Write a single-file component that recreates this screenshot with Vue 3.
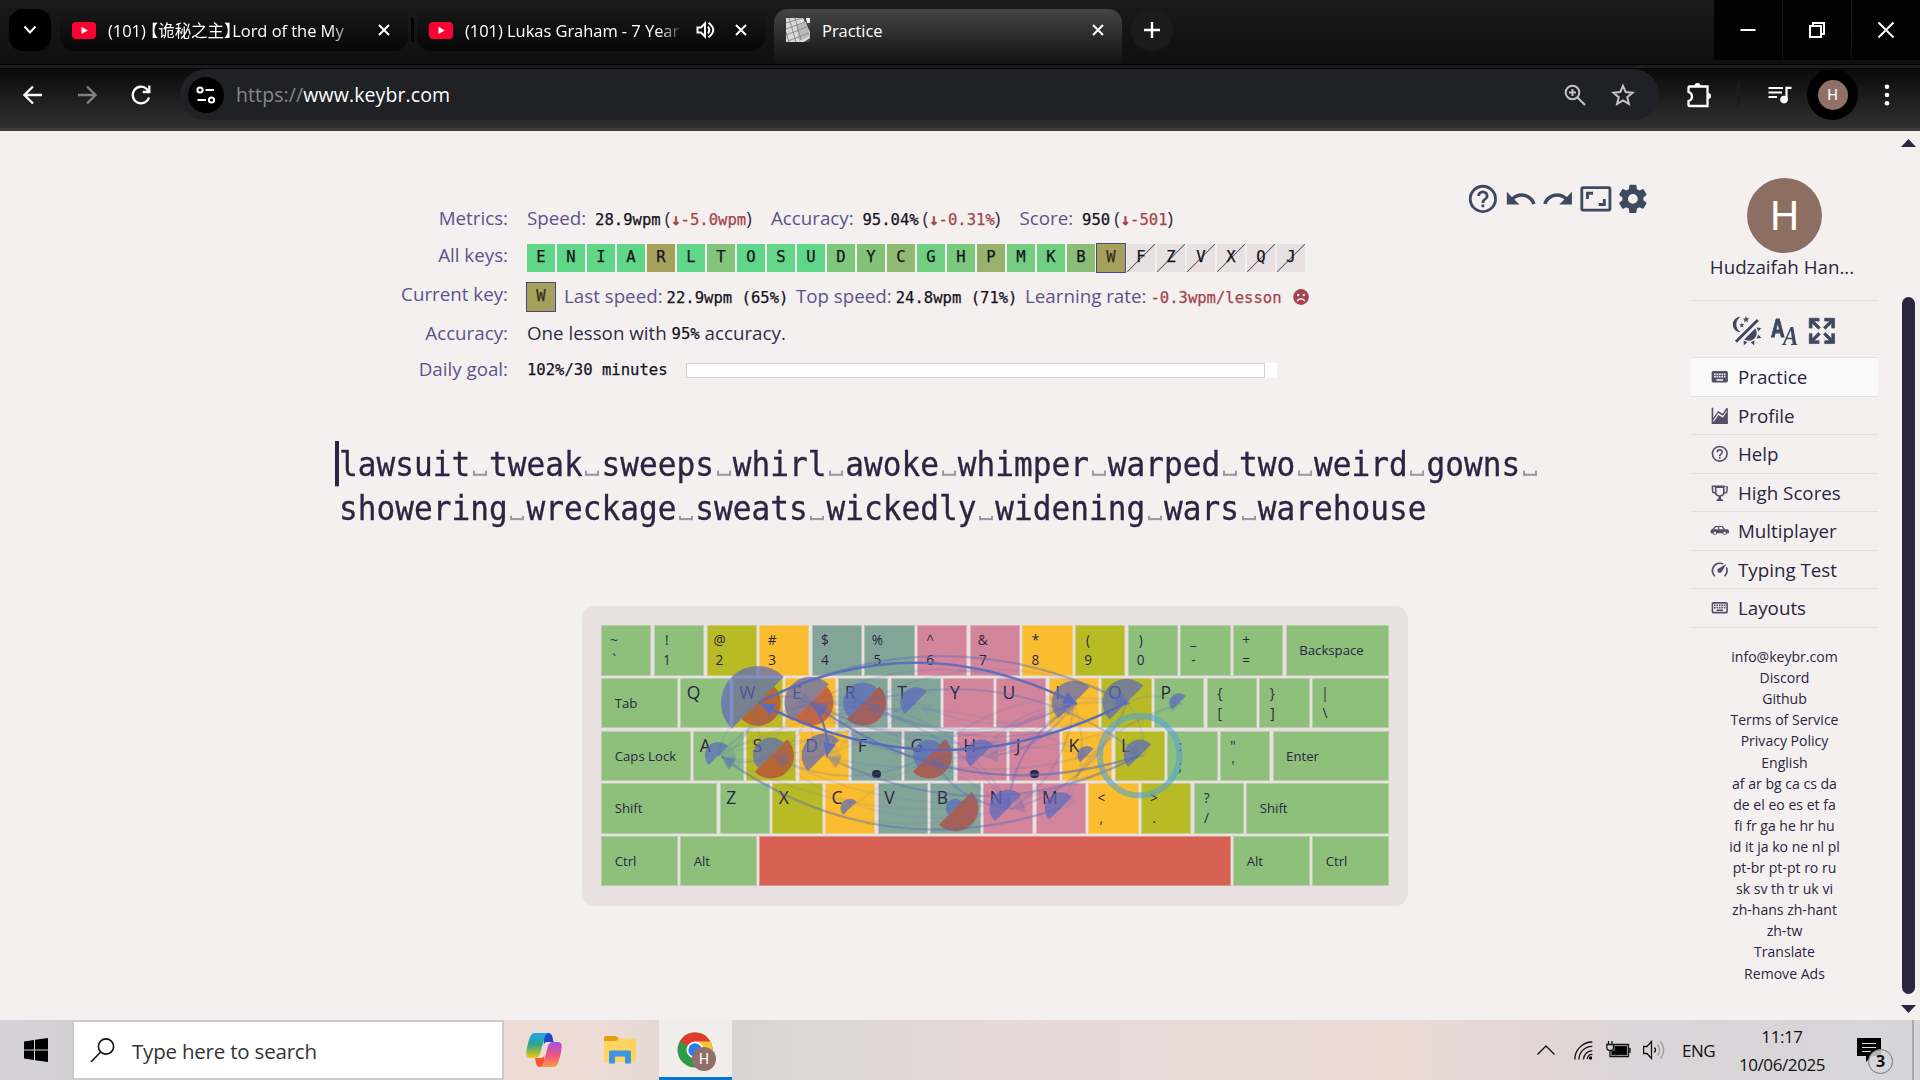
<script setup>
const tabs = [
  { title: '(101) 【诡秘之主】Lord of the My', muted: false },
  { title: '(101) Lukas Graham - 7 Year', muted: true },
]

const G1 = '#60d788', G2 = '#82c57a'
const allKeys = [
  ['E', G1], ['N', G1], ['I', G1], ['A', G1], ['R', '#a5a05c'], ['L', '#60d788'], ['T', G2], ['O', G1], ['S', '#66d587'],
  ['U', '#60d788'], ['D', '#7fc77c'], ['Y', '#85c279'], ['C', '#91b972'], ['G', '#70cf82'], ['H', '#7bc97e'], ['P', '#97b26c'],
  ['M', '#74cd80'], ['K', '#70cf82'], ['B', '#8abd75'], ['W', '#a5a05c', 'focused'], ['F', '#e9e1e1', 'off'], ['Z', '#e9e1e1', 'off'],
  ['V', '#e9e1e1', 'off'], ['X', '#e9e1e1', 'off'], ['Q', '#e9e1e1', 'off'], ['J', '#e9e1e1', 'off'],
].map(([ch, color, state]) => ({ ch, color, state }))

const lines = [
  'lawsuit tweak sweeps whirl awoke whimper warped two weird gowns '.split(''),
  'showering wreckage sweats wickedly widening wars warehouse'.split(''),
]

const P = {
  help: 'M11,18H13V16H11V18M12,2A10,10 0 0,0 2,12A10,10 0 0,0 12,22A10,10 0 0,0 22,12A10,10 0 0,0 12,2M12,20C7.59,20 4,16.41 4,12C4,7.59 7.59,4 12,4C16.41,4 20,7.59 20,12C20,16.41 16.41,20 12,20M12,6A4,4 0 0,0 8,10H10A2,2 0 0,1 12,8A2,2 0 0,1 14,10C14,12 11,11.75 11,15H13C13,12.75 16,12.5 16,10A4,4 0 0,0 12,6Z',
  undo: 'M12.5,8C9.85,8 7.45,9 5.6,10.6L2,7V16H11L7.38,12.38C8.77,11.22 10.54,10.5 12.5,10.5C16.04,10.5 19.05,12.81 20.1,16L22.47,15.22C21.08,11.03 17.15,8 12.5,8Z',
  redo: 'M18.4,10.6C16.55,9 14.15,8 11.5,8C6.85,8 2.92,11.03 1.54,15.22L3.9,16C4.95,12.81 7.95,10.5 11.5,10.5C13.45,10.5 15.23,11.22 16.62,12.38L13,16H22V7L18.4,10.6Z',
  ratio: 'M19,12H17V15H14V17H19V12M7,9H10V7H5V12H7V9M21,3H3A2,2 0 0,0 1,5V19A2,2 0 0,0 3,21H21A2,2 0 0,0 23,19V5A2,2 0 0,0 21,3M21,19H3V5H21V19Z',
  cog: 'M12,15.5A3.5,3.5 0 0,1 8.5,12A3.5,3.5 0 0,1 12,8.5A3.5,3.5 0 0,1 15.5,12A3.5,3.5 0 0,1 12,15.5M19.43,12.97C19.47,12.65 19.5,12.33 19.5,12C19.5,11.67 19.47,11.34 19.43,11L21.54,9.37C21.73,9.22 21.78,8.95 21.66,8.73L19.66,5.27C19.54,5.05 19.27,4.96 19.05,5.05L16.56,6.05C16.04,5.66 15.5,5.32 14.87,5.07L14.5,2.42C14.46,2.18 14.25,2 14,2H10C9.75,2 9.54,2.18 9.5,2.42L9.13,5.07C8.5,5.32 7.96,5.66 7.44,6.05L4.95,5.05C4.73,4.96 4.46,5.05 4.34,5.27L2.34,8.73C2.21,8.95 2.27,9.22 2.46,9.37L4.57,11C4.53,11.34 4.5,11.67 4.5,12C4.5,12.33 4.53,12.65 4.57,12.97L2.46,14.63C2.27,14.78 2.21,15.05 2.34,15.27L4.34,18.73C4.46,18.95 4.73,19.03 4.95,18.95L7.44,17.94C7.96,18.34 8.5,18.68 9.13,18.93L9.5,21.58C9.54,21.82 9.75,22 10,22H14C14.25,22 14.46,21.82 14.5,21.58L14.87,18.93C15.5,18.67 16.04,18.34 16.56,17.94L19.05,18.95C19.27,19.03 19.54,18.95 19.66,18.73L21.66,15.27C21.78,15.05 21.73,14.78 21.54,14.63L19.43,12.97Z',
  theme: 'M7.5,2C5.71,3.15 4.5,5.18 4.5,7.5C4.5,9.82 5.71,11.85 7.53,13C4.46,13 2,10.54 2,7.5A5.5,5.5 0 0,1 7.5,2M19.07,3.5L20.5,4.93L4.93,20.5L3.5,19.07L19.07,3.5M12.89,5.93L11.41,5L9.97,6L10.39,4.3L9,3.24L10.75,3.12L11.33,1.47L12,3.1L13.73,3.13L12.38,4.26L12.89,5.93M9.59,9.54L8.43,8.81L7.31,9.59L7.65,8.27L6.56,7.44L7.92,7.35L8.37,6.06L8.88,7.33L10.24,7.36L9.19,8.23L9.59,9.54M19,13.5A5.5,5.5 0 0,1 13.5,19C12.28,19 11.15,18.6 10.24,17.93L17.93,10.24C18.6,11.15 19,12.28 19,13.5M14.6,20.08L17.37,18.93L17.13,22.28L14.6,20.08M18.93,17.38L20.08,14.61L22.28,17.15L18.93,17.38M20.08,12.42L18.94,9.64L22.28,9.88L20.08,12.42M9.63,18.93L12.4,20.08L9.87,22.27L9.63,18.93Z',
  expand: 'M9.5,13.09L10.91,14.5L6.41,19H10V21H3V14H5V17.59L9.5,13.09M10.91,9.5L9.5,10.91L5,6.41V10H3V3H10V5H6.41L10.91,9.5M14.5,13.09L19,17.59V14H21V21H14V19H17.59L13.09,14.5L14.5,13.09M13.09,9.5L17.59,5H14V3H21V10H19V6.41L14.5,10.91L13.09,9.5Z',
  keyboard: 'M19,10H17V8H19M19,13H17V11H19M16,10H14V8H16M16,13H14V11H16M16,17H8V15H16M7,10H5V8H7M7,13H5V11H7M8,11H10V13H8M8,8H10V10H8M11,11H13V13H11M11,8H13V10H11M20,5H4C2.89,5 2,5.89 2,7V17A2,2 0 0,0 4,19H20A2,2 0 0,0 22,17V7C22,5.89 21.1,5 20,5Z',
  keyboardOutline: 'M4,5A2,2 0 0,0 2,7V17A2,2 0 0,0 4,19H20A2,2 0 0,0 22,17V7A2,2 0 0,0 20,5H4M4,7H20V17H4V7M5,8V10H7V8H5M8,8V10H10V8H8M11,8V10H13V8H11M14,8V10H16V8H14M17,8V10H19V8H17M5,11V13H7V11H5M8,11V13H10V11H8M11,11V13H13V11H11M14,11V13H16V11H14M17,11V13H19V11H17M8,14V16H16V14H8Z',
  chart: 'M2,2H4V14.5L10,6.2L15.5,9.6L20.3,2L22,3V22H2V2M4,20L10.5,11L15.8,14.4L21,6.5L20.2,5.8L15.8,12L10.2,8.6L4,17.5V20Z',
  trophy: 'M6,3H18V4H22V6L21.6,11C21.3,12.2 20,13 18,13C17.5,15 16,16.3 13.5,16.7V19.5C15.2,19.8 16,20.5 16,22H8C8,20.5 8.8,19.8 10.5,19.5V16.7C8,16.3 6.5,15 6,13C4,13 2.7,12.2 2.4,11L2,6V3H6M4,5V10.5C4.3,11 5,11.2 6,11.2V5H4M18,5V11.2C19,11.2 19.7,11 20,10.5V5H18M8,6V12C8.3,13.9 9.5,15 12,15C14.5,15 15.7,13.9 16,12V6H8Z',
  car: 'M6.5,6H15.5L18.5,10H21.5C22.6,10 23.3,10.9 23.3,12V15H21A3,3 0 0,1 15.2,15H8.8A3,3 0 0,1 3,15H0.8V12C0.8,10.9 1.6,10 2.7,10L6.5,6M7.3,7.5L5,10H10V7.5H7.3M11.5,7.5V10H16.4L14.7,7.5H11.5M6,13.2A1.5,1.5 0 0,0 6,16.2A1.5,1.5 0 0,0 6,13.2M18,13.2A1.5,1.5 0 0,0 18,16.2A1.5,1.5 0 0,0 18,13.2Z',
  speed: 'M12,16A3,3 0 0,1 9,13C9,11.9 9.6,10.9 10.5,10.4L20.2,4.8L14.7,14.3C14.1,15.3 13.2,16 12,16M12,3C13.8,3 15.5,3.5 17,4.3L14.9,5.5C14,5.2 13,5 12,5A8,8 0 0,0 4,13C4,15.2 4.9,17.2 6.3,18.7C6.7,19.1 6.7,19.7 6.3,20.1C5.9,20.5 5.3,20.5 4.9,20.1A10,10 0 0,1 12,3M22,13C22,15.8 20.9,18.3 19.1,20.1C18.7,20.5 18.1,20.5 17.7,20.1C17.3,19.7 17.3,19.1 17.7,18.7A8,8 0 0,0 20,13C20,12 19.8,11 19.5,10.1L20.7,8C21.5,9.5 22,11.2 22,13Z',
}

const toolIcons = [P.help, P.undo, P.redo, P.ratio, P.cog]
const menu = [
  ['Practice', P.keyboard, true], ['Profile', P.chart], ['Help', P.help], ['High Scores', P.trophy],
  ['Multiplayer', P.car], ['Typing Test', P.speed], ['Layouts', P.keyboardOutline],
].map(([label, icon, active]) => ({ label, icon, active }))

const links = [
  'info@keybr.com', 'Discord', 'Github', 'Terms of Service', 'Privacy Policy', 'English', 'af ar bg ca cs da',
  'de el eo es et fa', 'fi fr ga he hr hu', 'id it ja ko ne nl pl', 'pt-br pt-pt ro ru', 'sk sv th tr uk vi',
  'zh-hans zh-hant', 'zh-tw', 'Translate', 'Remove Ads',
]

// Keyboard: width is in key units, finger picks the zone colour.
const U = 52.67
const GAP = 2.4
const sym = (top, bottom, finger) => ({ top, bottom, finger, w: 1 })
const mod = (label, w) => ({ label, w, finger: 'pinky' })
const letters = (s, fingers) => s.split('').map((ch, i) => ({ ch, w: 1, finger: fingers[i], dot: ch === 'F' || ch === 'J' }))
const p = 'pinky', r = 'ring', m = 'middle', a = 'left', b = 'right'
const rows = [
  [sym('~', '`', p), sym('!', '1', p), sym('@', '2', r), sym('#', '3', m), sym('$', '4', a), sym('%', '5', a), sym('^', '6', b),
    sym('&', '7', b), sym('*', '8', m), sym('(', '9', r), sym(')', '0', p), sym('_', '-', p), sym('+', '=', p), mod('Backspace', 2)],
  [mod('Tab', 1.5), ...letters('QWERTYUIOP', [p, r, m, a, a, b, b, m, r, p]), sym('{', '[', p), sym('}', ']', p), { top: '|', bottom: '\\', finger: p, w: 1.5 }],
  [mod('Caps Lock', 1.75), ...letters('ASDFGHJKL', [p, r, m, a, a, b, b, m, r]), sym(':', ';', p), sym('"', "'", p), mod('Enter', 2.25)],
  [mod('Shift', 2.25), ...letters('ZXCVBNM', [p, r, m, a, a, b, b]), sym('<', ',', m), sym('>', '.', r), sym('?', '/', p), mod('Shift', 2.75)],
  [mod('Ctrl', 1.5), mod('Alt', 1.5), { w: 9, finger: 'thumb' }, mod('Alt', 1.5), mod('Ctrl', 1.5)],
]
const centers = {}
rows.forEach((row, y) => {
  let x = 0
  row.forEach((k) => {
    if (k.ch) centers[k.ch] = [(x + k.w / 2) * U - GAP / 2, (y + 0.5) * U - GAP / 2]
    x += k.w
  })
})

const half = (ch, rad, side) => {
  const [x, y] = centers[ch]
  const d = rad * Math.SQRT1_2
  return `M${x - d},${y + d}A${rad},${rad} 0 0,${side} ${x + d},${y - d}Z`
}
const hits = { W: 36.8, E: 26, R: 20, T: 15.6, I: 22, O: 24, P: 9.5, A: 13.5, S: 18, D: 22, G: 15.7, H: 16, K: 9.5, L: 16, C: 9.5, B: 9.5, N: 18.5, M: 16 }
const misses = ['W', 'E', 'R', 'S', 'G', 'B']
const hitPaths = Object.entries(hits).map(([ch, rad]) => half(ch, rad, 1))
const missPaths = misses.map((ch) => half(ch, 23, 0))

const arcs = [
  ['AT', 0.1], ['TA', 0.1], ['AN', 0.1], ['NA', 0.08], ['IN', 0.2], ['OR', 0.16], ['RO', 0.12], ['ER', 0.14], ['RE', 0.12], ['TE', 0.12], ['WA', 0.15],
  ['AW', 0.1], ['AK', 0.1], ['KE', 0.16], ['EI', 0.16], ['IE', 0.15], ['ES', 0.12], ['SH', 0.1], ['HO', 0.13], ['HE', 0.12], ['OP', 0.14], ['PE', 0.1],
  ['TW', 0.1], ['SW', 0.08], ['CK', 0.1], ['DE', 0.12], ['IG', 0.12], ['GO', 0.12], ['AG', 0.08], ['HI', 0.15], ['IM', 0.12], ['MP', 0.16], ['OK', 0.08],
  ['RD', 0.1], ['ID', 0.13], ['NS', 0.08], ['LA', 0.1], ['IT', 0.12], ['UI', 0.08], ['RS', 0.12], ['SE', 0.1], ['EN', 0.2], ['OL', 0.14], ['TR', 0.08],
  ['LS', 0.1], ['SA', 0.2], ['GS', 0.2], ['RL', 0.3], ['NG', 0.35], ['IR', 0.2], ['NI', 0.4], ['ON', 0.25], ['WE', 0.25], ['OE', 0.16], ['IH', 0.3], ['LD', 0.38],
  ['RN', 0.15], ['AR', 0.2], ['WO', 0.42], ['MA', 0.45], ['LE', 0.6], ['ED', 0.85], ['WI', 0.9], ['OW', 1],
].map(([pair, o]) => {
  const [x1, y1] = centers[pair[0]]
  const [x2, y2] = centers[pair[1]]
  const cx = (x1 + x2) / 2 + (y2 - y1) * 0.255
  const cy = (y1 + y2) / 2 - (x2 - x1) * 0.255
  const ang = Math.atan2(y2 - cy, x2 - cx)
  const tip = [x2 + 3, y2 + 1]
  const pt = (t) => `${tip[0] - 15 * Math.cos(ang + t)},${tip[1] - 15 * Math.sin(ang + t)}`
  return { d: `M${x1},${y1}Q${cx},${cy} ${x2 + 3},${y2 + 1}`, head: `${tip.join(',')} ${pt(0.45)} ${pt(-0.45)}`, o }
})
</script>

<template>
  <div class="screen">
    <header class="tabstrip">
      <div class="tabsearch"><svg width="14" height="10" viewBox="0 0 14 10"><path d="M1.5 1.5L7 7.5 12.5 1.5" /></svg></div>
      <template v-for="(t, i) in tabs" :key="i">
        <div class="tab">
          <svg class="yt" width="24" height="17" viewBox="0 0 24 17"><rect width="24" height="17" rx="4" fill="#f03" /><path d="M9.5 4.8V12L15.8 8.4Z" fill="#fff" /></svg>
          <span class="title fade">{{ t.title }}</span>
          <svg v-if="t.muted" class="sound" width="20" height="18" viewBox="0 0 20 18"><path d="M1.5 6.5H5L9 2.5V15.5L5 11.5H1.5Z M12 5.5Q14.5 9 12 12.5 M12.5 1.8Q22 9 12.5 16.2" /></svg>
          <svg class="x" width="12" height="12" viewBox="0 0 12 12"><path d="M1 1L11 11M11 1L1 11" /></svg>
        </div>
        <i v-if="i === 0" class="tabsep"></i>
      </template>
      <div class="tab active">
        <svg class="fav" width="24" height="24" viewBox="0 0 24 24">
          <rect width="24" height="24" fill="#d9d9d7" />
          <path d="M17 0L24 14V0Z" fill="#444" /><path d="M20 0H24V5L21 5Z" fill="#eee" /><path class="dim" d="M10 8L20 4 24 18 13 23Z" /><path d="M18 24L24 20V24Z" fill="#444" />
          <path d="M0 5L16 0M0 11L19 4M0 17L21 9M2 23L23 15M3 0L10 24M9 0L15 22M0 14L3 24" stroke="#8d8d8d" stroke-width="1" fill="none" />
        </svg>
        <span class="title">Practice</span>
        <svg class="x" width="12" height="12" viewBox="0 0 12 12"><path d="M1 1L11 11M11 1L1 11" /></svg>
      </div>
      <div class="newtab"><svg width="16" height="16" viewBox="0 0 16 16"><path d="M8 0V16M0 8H16" /></svg></div>
      <div class="winbtns">
        <span><svg width="16" height="16" viewBox="0 0 16 16"><path d="M0.5 8H15.5" /></svg></span>
        <span><svg width="16" height="16" viewBox="0 0 16 16"><path d="M1 4H12V15H1ZM4 4V1H15V12H12" /></svg></span>
        <span><svg width="16" height="16" viewBox="0 0 16 16"><path d="M0.5 0.5L15.5 15.5M15.5 0.5L0.5 15.5" /></svg></span>
      </div>
    </header>
    <div class="seam"></div>
    <div class="toolbar">
      <svg class="nav back" width="20" height="20" viewBox="0 0 20 20"><path d="M19 10H2M10 1.5L1.5 10 10 18.5" /></svg>
      <svg class="nav fwd" width="20" height="20" viewBox="0 0 20 20"><path d="M1 10H18M10 1.5L18.5 10 10 18.5" /></svg>
      <svg class="nav reload" width="20" height="20" viewBox="0 0 20 20"><path d="M18 12.5A8.3 8.3 0 1 1 16 4.2L18 6.5M18.3 0.5V7H11.8" /></svg>
      <div class="omnibox">
        <span class="site"><svg width="20" height="18" viewBox="0 0 20 18"><circle cx="4" cy="4" r="2.6" /><circle cx="15.5" cy="14" r="2.6" /><path d="M9.5 4H18M1.5 14H10" /></svg></span>
        <span class="url"><em>https://</em>www.keybr.com</span>
        <svg class="mag" width="22" height="22" viewBox="0 0 22 22"><circle cx="8.5" cy="8.5" r="6.8" /><path d="M13.5 13.5L21 21M8.5 5V12M5 8.5H12" /></svg>
        <svg class="star" width="24" height="24" viewBox="0 0 24 24"><path d="M12 2.8L14.7 9.1 21.5 9.7 16.3 14.2 17.9 20.9 12 17.3 6.1 20.9 7.7 14.2 2.5 9.7 9.3 9.1Z" /></svg>
      </div>
      <svg class="puzzle" width="26" height="26" viewBox="0 0 26 26"><path d="M3.500 4.500H21.500V24H3.500Q2.500 24 2.500 23V19Q6 18 6 14.500T2.500 10V5.500Q2.500 4.500 3.500 4.500Z" /><path class="knob" d="M8.500 4A3 3 0 0 1 14.500 4ZM22 11A3 3 0 0 1 22 17Z" /></svg>
      <i class="tbsep"></i>
      <svg class="music" width="24" height="18" viewBox="0 0 24 18"><path d="M0.5 2H15M0.5 6.5H14M0.5 11H9" stroke="#fff" stroke-width="2" /><path d="M18.5 14V1.8H23.5" stroke="#fff" stroke-width="2.2" fill="none" /><circle cx="16" cy="13.6" r="3.8" fill="#fff" /></svg>
      <span class="profile"><b>H</b></span>
      <svg class="dots" width="6" height="24" viewBox="0 0 6 24"><circle cx="3" cy="3.7" r="2.3" /><circle cx="3" cy="12" r="2.3" /><circle cx="3" cy="20.3" r="2.3" /></svg>
    </div>

    <div class="page">
      <main class="main">
        <div class="tools"><svg v-for="(d, i) in toolIcons" :key="i" viewBox="0 0 24 24"><path :d="d" /></svg></div>
        <section class="stats">
          <div class="row r1"><label>Metrics:</label>
            <div class="val metrics">
              <span><i>Speed:</i> <code>28.9wpm</code><span class="par">(</span><code class="red"><u>↓</u>-5.0wpm</code><span class="par">)</span></span>
              <span><i>Accuracy:</i> <code>95.04%</code><span class="par">(</span><code class="red"><u>↓</u>-0.31%</code><span class="par">)</span></span>
              <span><i>Score:</i> <code>950</code><span class="par">(</span><code class="red"><u>↓</u>-501</code><span class="par">)</span></span>
            </div>
          </div>
          <div class="row r2"><label>All keys:</label>
            <div class="val keys">
              <span v-for="k in allKeys" :key="k.ch" class="kb" :class="k.state" :style="{ backgroundColor: k.color }">{{ k.ch }}</span>
            </div>
          </div>
          <div class="row r3"><label>Current key:</label>
            <div class="val current">
              <span class="kb focused solo">W</span>
              <span class="info"><i>Last speed:</i><code>22.9wpm (65%)</code></span>
              <span class="info"><i>Top speed:</i><code>24.8wpm (71%)</code></span>
              <span class="info"><i>Learning rate:</i><code class="red">-0.3wpm/lesson</code></span>
              <svg class="sad" width="16" height="16" viewBox="0 0 16 16"><circle cx="8" cy="8" r="7.9" fill="#a6444d" /><circle cx="5.2" cy="6" r="1.2" fill="#f4f0ef" /><circle cx="10.8" cy="6" r="1.2" fill="#f4f0ef" /><path d="M4 12Q8 7.4 12 12" fill="none" stroke="#f4f0ef" stroke-width="1.4" /></svg>
            </div>
          </div>
          <div class="row r4"><label>Accuracy:</label><div class="val dark">One lesson with <code>95%</code> accuracy.</div></div>
          <div class="row r5"><label>Daily goal:</label>
            <div class="val goal"><code>102%/30 minutes</code><span class="bar"><span></span></span></div>
          </div>
        </section>
        <section class="typing">
          <div v-for="(line, i) in lines" :key="i" class="line"><span v-if="i === 0" class="cursor"></span><template v-for="(c, j) in line" :key="j"><span v-if="c === ' '" class="sp"><s></s></span><template v-else>{{ c }}</template></template></div>
        </section>
        <section class="board">
          <div v-for="(row, y) in rows" :key="y" class="krow">
            <div v-for="(k, x) in row" :key="x" class="key" :class="k.finger" :style="{ width: k.w * U - GAP + 'px' }">
              <span v-if="k.ch" class="letter">{{ k.ch }}</span>
              <span v-else-if="k.label" class="label">{{ k.label }}</span>
              <span v-else-if="k.top" class="sym"><span>{{ k.top }}</span><span>{{ k.bottom }}</span></span>
              <b v-if="k.dot" class="dot"></b>
            </div>
          </div>
          <svg class="heat" width="788" height="262" viewBox="0 0 788 262">
            <path v-for="(d, i) in hitPaths" :key="'h' + i" :d="d" fill="#5a6abc" opacity=".7" />
            <path v-for="(d, i) in missPaths" :key="'m' + i" :d="d" fill="#b84337" opacity=".7" />
            <g v-for="(e, i) in arcs" :key="'a' + i" :opacity="e.o">
              <path :d="e.d" fill="none" stroke="#5a6abc" stroke-width="2.3" />
              <polygon :points="e.head" fill="#5a6abc" />
            </g>
            <circle :cx="centers.L[0]" :cy="centers.L[1]" r="39.8" fill="none" stroke="#55a3d4" stroke-width="6" opacity=".6" />
          </svg>
        </section>
      </main>

      <aside class="side">
        <div class="avatar">H</div>
        <div class="name">Hudzaifah Han...</div>
        <div class="prefs">
          <svg viewBox="0 0 24 24"><path :d="P.theme" /></svg>
          <span class="aa"><b>A</b><i>A</i></span>
          <svg viewBox="0 0 24 24"><path :d="P.expand" stroke="#3d495e" stroke-width=".5" /></svg>
        </div>
        <nav>
          <a v-for="it in menu" :key="it.label" :class="{ on: it.active }"><svg viewBox="0 0 24 24"><path :d="it.icon" fill-rule="evenodd" /></svg>{{ it.label }}</a>
        </nav>
        <div class="links"><div v-for="l in links" :key="l">{{ l }}</div></div>
      </aside>
      <div class="scroll">
        <svg width="15" height="8" viewBox="0 0 15 8"><path d="M7.5 0L15 8H0Z" /></svg>
        <div class="thumb-bar"></div>
        <svg width="15" height="8" viewBox="0 0 15 8"><path d="M0 0H15L7.5 8Z" /></svg>
      </div>
    </div>

    <footer class="taskbar">
      <div class="start"><svg width="24" height="24" viewBox="0 0 24 24"><path d="M0 3.4L10 2V11.4H0ZM11 1.8L24 0V11.4H11ZM0 12.4H10V22L0 20.6ZM11 12.4H24V24L11 22.2Z" /></svg></div>
      <div class="search">
        <svg width="25" height="25" viewBox="0 0 25 25"><circle cx="16" cy="8.5" r="7.6" /><path d="M10.6 14L1 24" /></svg>
        <span>Type here to search</span>
      </div>
      <div class="app copilot">
        <svg width="36" height="34" viewBox="0 0 36 34">
          <defs>
            <linearGradient id="c1" x1="0" y1="0" x2="0" y2="1"><stop offset="0" stop-color="#1ba6f0" /><stop offset=".45" stop-color="#2aa58e" /><stop offset="1" stop-color="#f5c60a" /></linearGradient>
            <linearGradient id="c2" x1="0" y1="0" x2="0" y2="1"><stop offset="0" stop-color="#a34de8" /><stop offset=".55" stop-color="#f0577b" /><stop offset="1" stop-color="#fb9a4a" /></linearGradient>
          </defs>
          <path d="M18 0H22Q25.500 0 26.500 4L27.500 9H21Q18.500 9 17.800 12Z" fill="#1a49c8" />
          <path d="M18 34H14Q11 34 10 30L9 25H15Q17.600 25 18.300 22Z" fill="#f4553a" />
          <path d="M9 0H22Q19.500 1 18.500 5L14 21Q12.600 25 9 25H4Q0 25 .3 20C1 13 2.500 8 4 4Q5.300 0 9 0Z" fill="url(#c1)" />
          <path d="M27 34H14Q16.500 33 17.500 29L22 13Q23.400 9 27 9H32Q36 9 35.700 14C35 21 33.500 26 32 30Q30.700 34 27 34Z" fill="url(#c2)" />
        </svg>
      </div>
      <div class="app">
        <svg width="32" height="28" viewBox="0 0 32 28"><path d="M0 1.500Q0 0 1.500 0H12L15 3V8H0Z" fill="#e3a008" /><path d="M0 5H12L15 2.500H30.500Q32 2.500 32 4V25Q32 26 30.500 26H1.500Q0 26 0 25Z" fill="#ffd35c" /><path d="M5 27.500V16Q5 14.500 6.500 14.500H25.500Q27 14.500 27 16V27.500H21V20.500H11V27.500Z" fill="#3b96dd" /></svg>
      </div>
      <div class="app running">
        <svg width="36" height="36" viewBox="0 0 36 36">
          <circle cx="18" cy="18" r="17.500" fill="#2c9a46" />
          <path d="M18 18L2.800 9.300A17.500 17.500 0 0 1 33.200 9.300Z" fill="#e13b2e" /><path d="M18 9.500H33.300A17.500 17.500 0 0 1 18 35.500L25.400 22.200Z" fill="#fcc52d" />
          <circle cx="18" cy="18" r="8.500" fill="#fff" /><circle cx="18" cy="18" r="6.700" fill="#2f7de9" />
        </svg>
        <span class="badge">H</span>
      </div>
      <div class="tray">
        <svg class="chev" width="18" height="10" viewBox="0 0 18 10"><path d="M.5 9.500L9 1 17.500 9.500" /></svg>
        <svg class="wifi" width="19" height="19" viewBox="0 0 19 19"><path d="M.8 18.500A17.500 17.500 0 0 1 18.300 1M5 18.500A13 13 0 0 1 18.300 5.400M9.500 18.500A9 9 0 0 1 18.300 9.700M13.300 18A4.500 4.500 0 0 1 18.300 13.500" /><circle cx="16.500" cy="17" r="1.700" fill="#000" stroke="none" /></svg>
        <svg class="bat" width="25" height="18" viewBox="0 0 25 18"><path d="M8 3.500H22.500V15.500H4V10M24 7V12M2.500 0V3.500M6 0V3.500M.8 3.500H7.500V6.500Q7.500 9.500 4.200 9.500T.8 6.500Z" /><rect class="fill" x="9" y="5.500" width="11.500" height="8" /><rect class="fill" x="6" y="10" width="5" height="3.500" /></svg>
        <svg class="vol" width="23" height="20" viewBox="0 0 23 20"><path d="M.6 6.500H4L8.500 1.500V18.500L4 13.500H.6Z" /><path d="M11.500 7.500Q13.500 10 11.500 12.500" /><path d="M14.500 4.500Q18.500 10 14.500 15.500M17.500 1.500Q24 10 17.500 18.500" stroke="#999" /></svg>
        <span class="lang">ENG</span>
        <span class="clock"><span>11:17</span><span>10/06/2025</span></span>
        <span class="notif"><svg width="24" height="24" viewBox="0 0 24 24"><path d="M0 0H24V18H15L9 24V18H0Z" /><path d="M5 5.500H19M5 9.500H19M5 13.500H14" stroke="#ddd" stroke-width="1" /></svg><b>3</b></span>
        <i class="desk"></i>
      </div>
    </footer>
  </div>
</template>

<style>
html, body { margin: 0; overflow: hidden; }
</style>

<style scoped>
.screen { width: 1920px; height: 1080px; display: flex; flex-direction: column; overflow: hidden; font-family: "Open Sans", "Noto Sans", sans-serif; color: #2a2642; }
.screen * { box-sizing: border-box; }
svg { display: block; flex: none; }
i, em { font-style: normal; }

.tabstrip { height: 64px; flex: none; display: flex; align-items: flex-start; padding: 9px 0 0 9px; background: linear-gradient(#1a1a1a, #0f0f0f); color: #fff; }
.tabstrip svg path { fill: none; stroke: #fff; stroke-width: 2; }
.tabsearch { width: 42px; height: 42px; border-radius: 14px; background: #000; display: flex; align-items: center; justify-content: center; margin-right: 9px; }
.tab { width: 348px; height: 42px; display: flex; align-items: center; padding: 0 18px 0 12px; border-radius: 0 0 14px 14px; background: linear-gradient(#181818, #070707); font-size: 16.5px; }
.tabstrip .yt path { fill: #fff; stroke: none; }
.title { margin-left: 12px; padding-top: 2px; flex: 1; white-space: nowrap; overflow: hidden; font-family: "Open Sans", "Noto Sans CJK SC", sans-serif; font-feature-settings: "halt"; line-height: 24px; letter-spacing: -.05px; }
.fade { -webkit-mask-image: linear-gradient(90deg, #000 88%, transparent); mask-image: linear-gradient(90deg, #000 88%, transparent); }
.tab .x { margin-left: 18px; }
.tab .sound { margin-left: 11px; }
.tab .sound + .x { margin-left: 19px; }
.tabsep { width: 3px; height: 24px; background: #000; margin: 9px 3px 0; }
.tab.active { height: 55px; margin-left: 9px; padding-bottom: 13px; border-radius: 14px 14px 0 0; background: linear-gradient(#454545, #111); }
.tabstrip .fav path { stroke: none; fill: #444; }
.tabstrip .fav path.dim { fill: #b9b9b9; }
.tabstrip .fav path:nth-of-type(2) { fill: #eee; }
.tabstrip .fav path:last-child { fill: none; stroke: #8d8d8d; stroke-width: 1; }
.newtab { width: 42px; height: 42px; border-radius: 50%; background: #1b1b1b; margin-left: 9px; display: flex; align-items: center; justify-content: center; }
.newtab path { stroke-width: 2.4 !important; }
.winbtns { margin: -9px 0 0 auto; display: flex; gap: 1px; }
.winbtns span { width: 68px; height: 60px; background: #020202; display: flex; align-items: center; justify-content: center; padding-right: 1px; }
.seam { height: 5px; flex: none; background: #1c1c1c; border-top: 1px solid #000; border-bottom: 1px solid #000; }

.toolbar { height: 62px; flex: none; display: flex; align-items: center; padding: 0 0 11px 23px; background: linear-gradient(#0a0a0a, #303030 95%, #3c3c3c 96%); }
.nav { margin-right: 34px; }
.nav path { fill: none; stroke: #fff; stroke-width: 2.3; }
.fwd path { stroke: #808080; }
.reload { margin-right: 29px; }
.omnibox { width: 1479px; height: 51px; border-radius: 26px; background: #202124; display: flex; align-items: center; padding-left: 8px; }
.site { width: 36px; height: 36px; border-radius: 50%; background: #000; display: flex; align-items: center; justify-content: center; }
.site svg *, .mag *, .star * { fill: none; stroke: #fff; stroke-width: 2; }
.url { margin-left: 12px; color: #fff; font-size: 19.5px; letter-spacing: .1px; flex: 1; }
.url em { color: #888; }
.mag *, .star * { stroke: #c4c4c4; }
.mag { margin-right: 25px; }
.star { margin-right: 24px; }
.puzzle { margin-left: 27px; }
.puzzle path { fill: none; stroke: #fff; stroke-width: 2.3; }
.puzzle .knob { fill: #fff; stroke: none; }
.tbsep { width: 3px; height: 24px; background: #1b1b1b; margin-left: 25px; }
.music { margin-left: 28px; }
.profile { width: 51px; height: 51px; border-radius: 50%; background: #000; display: flex; align-items: center; justify-content: center; margin-left: 15px; }
.profile b { width: 30px; height: 30px; border-radius: 50%; background: #8f7167; color: #fff; font: 15px/30px Roboto, sans-serif; text-align: center; }
.dots { margin-left: 26px; fill: #fff; }

.page { height: 889px; flex: none; display: flex; background: #f4f0ef; }
.main { width: 1691px; position: relative; display: flex; flex-direction: column; }
.tools { position: absolute; right: 41px; top: 51px; display: flex; gap: 3.75px; }
.tools svg { width: 33.75px; height: 33.75px; fill: #3d495e; }
.stats { margin-top: 68px; font-size: 18.75px; color: #5a548c; }
.row { display: flex; align-items: center; }
.row label { width: 508px; text-align: right; margin-right: 19px; }
.r1 { height: 36px; } .r2 { height: 39px; } .r3 { height: 39px; } .r4 { height: 38px; } .r5 { height: 34px; }
code { font: 15.57px "DejaVu Sans Mono", monospace; color: #15131f; white-space: pre; -webkit-text-stroke: .25px currentColor; }
.red { color: #a6444d; }
.par, .dark { color: #2f2b45; }
.val { display: flex; align-items: center; white-space: pre; }
.metrics { gap: 19.200px; }
.metrics code:first-of-type { margin-left: 4px; }
.metrics .par { margin: 0 1px 0 4px; }
.metrics .par:last-child { margin: 0; }
.metrics u { text-decoration: none; -webkit-text-stroke: .8px currentColor; }
.keys { gap: 2px; padding-top: 7px; }
.kb { width: 28px; height: 28px; font: 15.57px/27px "DejaVu Sans Mono", monospace; color: #15131f; text-align: center; -webkit-text-stroke: .25px currentColor; }
.focused { width: 30px; height: 30px; border: 1px solid #4a4683; margin: -1px; color: #35301f; }
.off { background-image: linear-gradient(to bottom right, transparent calc(50% - .8px), #6d6870 calc(50% - .4px), #6d6870 calc(50% + .4px), transparent calc(50% + .8px)); }
.current { padding-top: 7px; }
.solo { margin: 0 8px 0 -1px; background: #a5a05c; }
.info { margin: -4px 7.500px 0 0; }
.info code { margin-left: 4px; }
.sad { margin-left: 4px; }
.dark code { padding-top: 3px; }
.goal code { padding-top: 3px; }
.goal .bar { width: 591px; height: 15px; background: #fff; margin-left: 18px; margin-top: 4px; }
.bar span { display: block; width: 579px; height: 15px; border: 1px solid #d9cfd0; }

.typing { margin: 56px 0 0 339px; font: 31.14px/42.65px "DejaVu Sans Mono", monospace; color: #2a2642; transform: scaleY(1.055); transform-origin: 0 0; height: 90px; -webkit-text-stroke: .3px currentColor; }
.line { white-space: pre; height: 42.65px; position: relative; padding-top: .6px; }
.cursor { position: absolute; left: -4px; top: 0; width: 4px; height: 42.65px; background: #2a2642; }
.sp { display: inline-block; width: 18.75px; }
.sp s { display: block; width: 14px; height: 4.500px; margin-left: 2.500px; border: 2px solid #9c98a6; border-top: 0; }

.board { width: 826px; height: 300px; margin: 75px 0 0 582px; padding: 19.400px 19.200px; border-radius: 13px; background: #e9e1e1; position: relative; display: flex; flex-direction: column; gap: 2.400px; }
.krow { display: flex; gap: 2.400px; }
.key { height: 50.270px; flex: none; border: 1px solid rgba(233, 225, 225, .45); position: relative; color: #2a2642; font-size: 13.600px; }
.pinky { background: #8ec07c; } .ring { background: #b8bb26; } .middle { background: #fabd2f; } .left { background: #83a598; } .right { background: #d3869b; } .thumb { background: #d66153; }
.letter { display: block; margin-left: 5.500px; font-size: 17.500px; line-height: 26.500px; }
.label { display: block; margin-left: 12.500px; line-height: 49.500px; font-size: 13.200px; }
.sym { display: block; width: 24px; padding-top: 4px; text-align: center; }
.sym span { display: block; line-height: 20px; }
.dot { position: absolute; left: 20px; bottom: 1.500px; width: 8.500px; height: 8.500px; border-radius: 50%; background: #2a2642; }
.heat { position: absolute; left: 19.200px; top: 19.400px; overflow: visible; }

.side { width: 187px; display: flex; flex-direction: column; align-items: center; padding-top: 47px; }
.avatar { width: 75px; height: 75px; border-radius: 50%; background: #8d6e63; color: #fff; font: 41px/77px Roboto, sans-serif; text-align: center; }
.name { font-size: 18.75px; line-height: 28px; margin-right: 5px; }
.prefs { width: 187px; margin-top: 19px; height: 57px; border-top: 1px solid #e4dedd; display: flex; align-items: center; justify-content: center; gap: 4px; padding-top: 3px; }
.prefs svg { width: 33.75px; height: 33.75px; fill: #3d495e; }
.aa { width: 33px; height: 34px; color: #3d495e; display: flex; }
.aa b { font: bold 26px/29px "Liberation Sans", sans-serif; display: block; width: 15px; transform: scaleX(.72); transform-origin: 0 0; margin-left: 3px; -webkit-text-stroke: 1.200px currentColor; }
.aa i { font: italic bold 27px/45px "Liberation Serif", serif; display: block; transform: scaleX(.85); transform-origin: 0 0; margin-left: -3px; }
nav { width: 187px; border-top: 1px solid #e4dedd; }
nav a { display: flex; align-items: center; height: 38.500px; border-bottom: 1px solid #e4dedd; padding-left: 18.500px; font-size: 18.75px; }
nav a.on { background: #f9f9f9; }
nav svg { width: 19.500px; height: 19.500px; fill: #544f69; margin-right: 9px; }
.links { margin-top: 18.600px; text-align: center; font-size: 14.060px; line-height: 21.090px; white-space: nowrap; }
.scroll { margin-left: 23px; width: 15px; display: flex; flex-direction: column; align-items: center; padding-top: 8px; fill: #2a2642; }
.thumb-bar { width: 13px; height: 697px; border-radius: 7px; background: #2a2642; margin: 150px 0 11px; }

.taskbar { height: 60px; flex: none; display: flex; background: linear-gradient(90deg, #d6d4d8 0, #d2d0d3 73px, #ecdcd5 503px, #ecdcd5 600px, #d9d5d4 733px, #e6dad7 1000px, #ecdad5 1400px, #dcd4d8 1640px, #d6d6d8 1900px); color: #111; }
.start { width: 72px; padding: 18px 0 0 24px; }
.search { width: 432px; height: 60px; background: #fff; border: 2px solid #cacaca; display: flex; align-items: center; padding-left: 16px; }
.search svg *, .tray svg { fill: none; stroke: #111; stroke-width: 1.600; }
.search span { margin-left: 17px; padding-top: 2px; font-size: 20.500px; color: #333; letter-spacing: -.2px; }
.app { width: 77.500px; display: flex; align-items: center; justify-content: center; }
.copilot { padding-left: 3px; }
.running { width: 73px; background: #f1edeb; border-bottom: 3px solid #0078d7; position: relative; padding: 3px 2px 0 0; }
.badge { position: absolute; left: 33px; top: 27px; width: 24px; height: 24px; border-radius: 50%; background: #8f7167; color: #fff; font: 14px/24px Roboto, sans-serif; text-align: center; }
.tray { margin-left: auto; width: 383px; display: flex; align-items: center; position: relative; }
.tray svg { stroke-width: 1.300; }
.tray .fill { fill: #000; }
.wifi { margin-left: 19px; } .bat { margin-left: 13px; } .vol { margin-left: 12px; }
.lang { margin-left: 16px; font-size: 17px; letter-spacing: -.5px; width: 34px; }
.clock { margin-left: 16px; width: 100px; text-align: center; font-size: 17px; letter-spacing: -.4px; display: flex; flex-direction: column; line-height: 28px; padding-top: 1px; }
.notif { margin-left: 25px; position: relative; }
.notif svg { fill: #000; stroke: none; }
.notif b { position: absolute; left: 11px; top: 11px; width: 25px; height: 25px; border-radius: 50%; border: 1px solid #777; background: rgba(214, 214, 216, .85); font-size: 16px; line-height: 23px; text-align: center; }
.desk { position: absolute; right: 6px; top: 0; width: 2px; height: 60px; background: #a9a9ab; }
</style>
